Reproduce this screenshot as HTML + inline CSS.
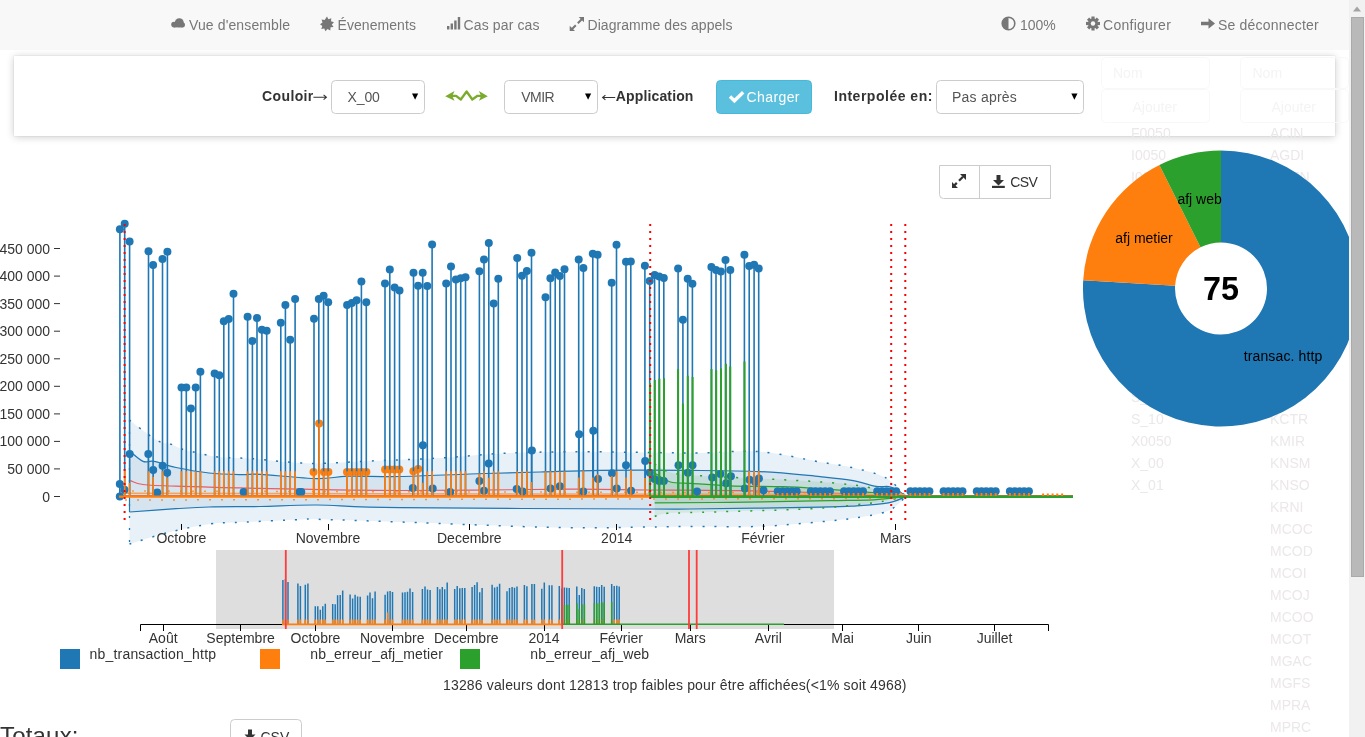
<!DOCTYPE html>
<html><head><meta charset="utf-8">
<style>
html,body{margin:0;padding:0;width:1365px;height:737px;overflow:hidden;background:#fff;font-family:"Liberation Sans",sans-serif;}
#nav{position:absolute;z-index:0;left:0;top:0;width:1349px;height:50px;background:#f8f8f8;}
#panel{position:absolute;z-index:0;left:14px;top:56px;width:1321px;height:80px;background:#fff;box-shadow:0 0 1px rgba(0,0,0,0.18),0 1px 8px rgba(0,0,0,0.2);}
#sb{position:absolute;z-index:6;left:1349px;top:0;width:16px;height:737px;background:#f1f1f1;}
#thumb{position:absolute;z-index:7;left:1351px;top:17px;width:13px;height:560px;background:#b9b9b9;border:1px solid #aaa;box-sizing:border-box;}
svg{position:absolute;left:0;top:0;will-change:transform;}
text{font-family:"Liberation Sans",sans-serif;}
</style></head><body>
<svg width="1365" height="737" style="z-index:1">
<text x="1131" y="138.4" font-size="14" fill="#ece8ea">F0050</text>
<text x="1131" y="160.4" font-size="14" fill="#ece8ea">I0050</text>
<text x="1131" y="182.4" font-size="14" fill="#ece8ea">I0060</text>
<text x="1131" y="204.4" font-size="14" fill="#ece8ea">J0050</text>
<text x="1131" y="226.4" font-size="14" fill="#ece8ea">J0060</text>
<text x="1131" y="248.4" font-size="14" fill="#ece8ea">K0050</text>
<text x="1131" y="270.4" font-size="14" fill="#ece8ea">L0050</text>
<text x="1131" y="292.4" font-size="14" fill="#ece8ea">M0050</text>
<text x="1131" y="314.4" font-size="14" fill="#ece8ea">N0050</text>
<text x="1131" y="336.4" font-size="14" fill="#ece8ea">P0050</text>
<text x="1131" y="358.4" font-size="14" fill="#ece8ea">Q0050</text>
<text x="1131" y="380.4" font-size="14" fill="#ece8ea">R0050</text>
<text x="1131" y="402.4" font-size="14" fill="#ece8ea">S_00</text>
<text x="1131" y="424.4" font-size="14" fill="#ece8ea">S_10</text>
<text x="1131" y="446.4" font-size="14" fill="#ece8ea">X0050</text>
<text x="1131" y="468.4" font-size="14" fill="#ece8ea">X_00</text>
<text x="1131" y="490.4" font-size="14" fill="#ece8ea">X_01</text>
<text x="1270" y="138.4" font-size="14" fill="#ece8ea">ACIN</text>
<text x="1270" y="160.4" font-size="14" fill="#ece8ea">AGDI</text>
<text x="1270" y="182.4" font-size="14" fill="#ece8ea">AGEN</text>
<text x="1270" y="204.4" font-size="14" fill="#ece8ea">AGRE</text>
<text x="1270" y="226.4" font-size="14" fill="#ece8ea">BCAR</text>
<text x="1270" y="248.4" font-size="14" fill="#ece8ea">BCOM</text>
<text x="1270" y="270.4" font-size="14" fill="#ece8ea">BDOC</text>
<text x="1270" y="292.4" font-size="14" fill="#ece8ea">CAPT</text>
<text x="1270" y="314.4" font-size="14" fill="#ece8ea">CFAC</text>
<text x="1270" y="336.4" font-size="14" fill="#ece8ea">DCLI</text>
<text x="1270" y="358.4" font-size="14" fill="#ece8ea">EDIT</text>
<text x="1270" y="380.4" font-size="14" fill="#ece8ea">GCOM</text>
<text x="1270" y="402.4" font-size="14" fill="#ece8ea">KCAP</text>
<text x="1270" y="424.4" font-size="14" fill="#ece8ea">KCTR</text>
<text x="1270" y="446.4" font-size="14" fill="#ece8ea">KMIR</text>
<text x="1270" y="468.4" font-size="14" fill="#ece8ea">KNSM</text>
<text x="1270" y="490.4" font-size="14" fill="#ece8ea">KNSO</text>
<text x="1270" y="512.4" font-size="14" fill="#ece8ea">KRNI</text>
<text x="1270" y="534.4" font-size="14" fill="#ece8ea">MCOC</text>
<text x="1270" y="556.4" font-size="14" fill="#ece8ea">MCOD</text>
<text x="1270" y="578.4" font-size="14" fill="#ece8ea">MCOI</text>
<text x="1270" y="600.4" font-size="14" fill="#ece8ea">MCOJ</text>
<text x="1270" y="622.4" font-size="14" fill="#ece8ea">MCOO</text>
<text x="1270" y="644.4" font-size="14" fill="#ece8ea">MCOT</text>
<text x="1270" y="666.4" font-size="14" fill="#ece8ea">MGAC</text>
<text x="1270" y="688.4" font-size="14" fill="#ece8ea">MGFS</text>
<text x="1270" y="710.4" font-size="14" fill="#ece8ea">MPRA</text>
<text x="1270" y="732.4" font-size="14" fill="#ece8ea">MPRC</text>
<g fill="none" stroke="#f8f8f8" stroke-width="1">
<rect x="1101.5" y="57.5" width="108" height="31" rx="4"/>
<rect x="1101.5" y="89.5" width="108" height="33" rx="4"/>
<rect x="1240.5" y="57.5" width="108" height="31" rx="4"/>
<rect x="1240.5" y="89.5" width="108" height="33" rx="4"/>
</g>
<g font-size="14" fill="#f4f4f4">
<text x="1113" y="77.5">Nom</text>
<text x="1252.5" y="77.5">Nom</text>
<text x="1132.5" y="111.5">Ajouter</text>
<text x="1271.5" y="111.5">Ajouter</text>
</g>
</svg>
<div id="nav"></div>
<div id="panel"></div>
<svg width="1365" height="737" style="z-index:2">
<g font-size="14" fill="#777">
<!-- cloud -->
<g fill="#777"><circle cx="179.3" cy="22.7" r="4.5"/><circle cx="174" cy="24.6" r="2.8"/><circle cx="182.4" cy="24.8" r="2.6"/><rect x="174" y="23" width="8.4" height="4.4"/></g>
<text x="189" y="30" textLength="101" lengthAdjust="spacing">Vue d'ensemble</text>
<!-- certificate starburst -->
<path d="M327 16.5 L328.4 19.2 L331.3 18.2 L331 21.2 L334 22.3 L331.8 24.4 L333.6 26.9 L330.6 27.3 L330.3 30.4 L327.5 29.1 L325.4 31.3 L324.3 28.5 L321.3 28.9 L322.3 26 L320 24.2 L322.5 22.5 L321.6 19.6 L324.6 19.9 Z" fill="#777"/>
<text x="337.5" y="30" textLength="78.4" lengthAdjust="spacing">Évenements</text>
<!-- signal -->
<rect x="447" y="26" width="2.4" height="3.5" fill="#777"/>
<rect x="450.6" y="23.5" width="2.4" height="6" fill="#777"/>
<rect x="454.2" y="20.5" width="2.4" height="9" fill="#777"/>
<rect x="457.8" y="17" width="2.4" height="12.5" fill="#777"/>
<text x="463.5" y="30" textLength="76" lengthAdjust="spacing">Cas par cas</text>
<!-- resize full -->
<path d="M577.8 23.2 L581.8 19.2 M575.8 25.2 L571.8 29.2" stroke="#777" stroke-width="2"/>
<path d="M584 17 V22.3 L578.7 17Z M569.7 31 V25.7 L575 31Z" fill="#777"/>
<text x="587.5" y="30" textLength="145" lengthAdjust="spacing">Diagramme des appels</text>
<!-- adjust -->
<circle cx="1008.5" cy="23.5" r="6.3" fill="none" stroke="#777" stroke-width="1.6"/>
<path d="M1008.5 17.2 A6.3 6.3 0 0 0 1008.5 29.8Z" fill="#777"/>
<text x="1020" y="30" textLength="35.6" lengthAdjust="spacing">100%</text>
<!-- cog -->
<g transform="translate(1093,23.5)">
<circle r="5" fill="#777"/>
<g fill="#777">
<rect x="-1.6" y="-7" width="3.2" height="14"/>
<rect x="-1.6" y="-7" width="3.2" height="14" transform="rotate(45)"/>
<rect x="-1.6" y="-7" width="3.2" height="14" transform="rotate(90)"/>
<rect x="-1.6" y="-7" width="3.2" height="14" transform="rotate(135)"/>
</g>
<circle r="2.2" fill="#f8f8f8"/>
</g>
<text x="1103" y="30" textLength="67.8" lengthAdjust="spacing">Configurer</text>
<!-- arrow right -->
<path d="M1201 21.8 H1208.5 V18.2 L1215 23.5 L1208.5 28.8 V25.2 H1201Z" fill="#777"/>
<text x="1218" y="30" textLength="100.7" lengthAdjust="spacing">Se déconnecter</text>
</g>

<!-- form -->
<g font-size="14">
<text x="262" y="101" font-weight="bold" fill="#333" textLength="51.3" lengthAdjust="spacing">Couloir</text>
<path d="M313.4 97.3 H326.4 M323.6 94.9 L326.4 97.3 L323.6 99.7" fill="none" stroke="#333" stroke-width="1.1"/>
<rect x="331.5" y="80.5" width="93" height="33" rx="4" fill="#fff" stroke="#ccc"/>
<text x="347.5" y="102" fill="#555" textLength="32.4" lengthAdjust="spacing">X_00</text>
<path d="M412 93.6 L418.2 93.6 L415.1 99.8Z" fill="#000"/>
<!-- wavy arrows -->
<path d="M452 95.8 H456.1 L460.8 99.5 L466.6 91.5 L472.3 99.5 L477.5 95.8 H481" fill="none" stroke="#7aab2d" stroke-width="2.3" stroke-linejoin="round"/>
<path d="M445.2 96.3 L454.5 91 L452.3 96.1 L454.5 100.8Z" fill="#7aab2d"/>
<path d="M487.8 96.3 L478.9 91 L481.1 96.1 L478.9 100.8Z" fill="#7aab2d"/>
<rect x="504.5" y="80.5" width="93" height="33" rx="4" fill="#fff" stroke="#ccc"/>
<text x="521.2" y="102" fill="#555" textLength="33.5" lengthAdjust="spacing">VMIR</text>
<path d="M585 93.6 L591.2 93.6 L588.1 99.8Z" fill="#000"/>
<text x="615.8" y="101" font-weight="bold" fill="#333" textLength="77.6" lengthAdjust="spacing">Application</text>
<path d="M602.6 97.5 H615.2 M605.4 95.1 L602.6 97.5 L605.4 99.9" fill="none" stroke="#333" stroke-width="1.1"/>
<rect x="716.5" y="80.5" width="95" height="33" rx="4" fill="#5bc0de" stroke="#46b8da"/>
<path d="M730 96.6 L734.4 100.8 L743.2 92.3" fill="none" stroke="#fff" stroke-width="3.4"/>
<text x="746.5" y="102" fill="#fff" textLength="53" lengthAdjust="spacing">Charger</text>
<text x="834" y="101" font-weight="bold" fill="#333" textLength="98.4" lengthAdjust="spacing">Interpolée en:</text>
<rect x="936.5" y="80.5" width="147" height="33" rx="4" fill="#fff" stroke="#ccc"/>
<text x="952" y="102" fill="#555" textLength="64.8" lengthAdjust="spacing">Pas après</text>
<path d="M1071.3 93.6 L1077.5 93.6 L1074.4 99.8Z" fill="#000"/>
</g>

<!-- csv group -->
<path d="M979.5 165.5 H939.5 V194.5 A4 4 0 0 0 943.5 198.5 H979.5Z" fill="#fff" stroke="#ccc"/>
<rect x="979.5" y="165.5" width="71" height="33" fill="#fff" stroke="#ccc"/>
<path d="M959 180.7 L963 176.7 M956.8 182.9 L953 186.7" stroke="#333" stroke-width="2.2"/>
<path d="M966 174 V180 L960 174Z M952 188.1 V182.1 L958 188.1Z" fill="#333"/>
<path d="M996.5 175 H1000.5 V180 H1004 L998.5 185.5 L993 180 H996.5Z" fill="#333"/>
<rect x="992" y="185.8" width="12.8" height="2.2" fill="#333"/>
<text x="1010.2" y="186.6" font-size="14" fill="#333" textLength="27.6" lengthAdjust="spacing">CSV</text>

<!-- totaux -->
<text x="0" y="743.5" font-size="24" fill="#333" textLength="78.5" lengthAdjust="spacing">Totaux:</text>
<rect x="230.5" y="719.5" width="71" height="34" rx="4" fill="#fff" stroke="#ccc"/>
<path d="M248 729.5 H252 V734.5 H255.5 L250 740 L244.5 734.5 H248Z" fill="#333"/>
<text x="260.5" y="742" font-size="14" fill="#333">CSV</text>

<path d="M129.5 420 C132.1 422 140 428.4 145 432 C150 435.6 155.1 439.5 159.5 441.6 C163.9 443.7 167.7 443.1 171.5 444.4 C175.3 445.7 178.8 448 182.5 449.3 C186.2 450.6 189.7 451.1 193.5 452 C197.3 452.9 201.6 454 205.6 454.8 C209.6 455.6 211.8 456.4 217.7 457 C223.6 457.6 234.9 457.8 240.8 458.1 C246.7 458.4 241.4 457.8 252.9 458.7 C264.4 459.6 290.5 463 310 463.4 C329.5 463.8 348.3 461.9 370 461 C391.7 460.1 418.3 459.2 440 458 C461.7 456.8 478.3 454.6 500 453.5 C521.7 452.4 545 451.9 570 451.7 C595 451.5 628.5 452.3 650 452.5 C671.5 452.7 680.7 453 699 452.9 C717.3 452.8 739.8 450.2 760 451.7 C780.2 453.2 804.7 459.4 820 462 C835.3 464.6 840.7 464.9 851.7 467.5 C862.7 470.1 877 473.1 886 477.9 C895 482.7 902.2 493.1 905.5 496.2 L905.5 496.8 C902.6 499.1 896.9 507.2 888.4 510.8 C879.9 514.4 865.6 516.3 854.2 518.1 C842.8 519.9 835.7 520.4 820 521.8 C804.3 523.2 781.7 525.6 760 526.4 C738.3 527.2 708.3 526.3 690 526.4 C671.7 526.5 671.7 526.8 650 527 C628.3 527.2 601.7 528.4 560 527.6 C518.3 526.8 440.5 523.4 400 522 C359.5 520.6 333.7 519.7 317 519.3 C300.3 518.9 312.8 519.1 300 519.6 C287.2 520.1 255 521.6 240 522.3 C225 523 221.7 522.4 210 524 C198.3 525.6 183.4 528.7 170 532 C156.6 535.3 136.2 542 129.5 544 Z" fill="#e8f0f8"/>
<path d="M129.5 451 C131.8 452.7 138.9 459.7 143 461.4 C147.1 463.1 148.5 460.4 154 461.4 C159.5 462.4 166.8 465.6 176 467.5 C185.2 469.4 198 471.8 209 473 C220 474.2 233.5 474.4 242 474.6 C250.5 474.8 247.5 473.6 260 474.3 C272.5 475 302.4 478.3 317 478.6 C331.6 478.9 333.7 476.6 347.5 476.2 C361.3 475.8 379.6 476.9 400 476.5 C420.4 476.1 446.7 474.8 470 474 C493.3 473.2 518.3 472.6 540 472 C561.7 471.4 575 470.7 600 470.4 C625 470.1 663.3 470.2 690 470.4 C716.7 470.6 738.3 470.6 760 471.6 C781.7 472.6 804.7 475.2 820 476.6 C835.3 478.1 842.3 478.7 851.7 480.3 C861.1 481.9 869.7 485.3 876.2 486.4 C882.7 487.5 885.9 485.5 890.8 487 C895.7 488.5 903 494.2 905.5 495.6 L905.5 496.8 C902.6 497.8 896.5 501.4 888.4 502.9 C880.2 504.4 868 505.2 856.6 505.9 C845.2 506.6 847.8 506.7 820 507.2 C792.2 507.7 718.3 508.7 690 509 C661.7 509.3 698.3 509.2 650 509 C601.7 508.8 455.5 508.4 400 507.7 C344.5 507 340.3 505.2 317 505 C293.7 504.8 278 506.2 260 506.5 C242 506.8 223 506.6 209 507 C195 507.4 189.2 507.9 176 508.7 C162.8 509.5 137.2 511.4 129.5 512 Z" fill="#d6e4ef"/>
<path d="M654.7 464 C657.3 465.4 662.2 470.4 670.5 472.4 C678.8 474.4 682 474.6 704.7 476 C727.4 477.4 780.8 479.4 806.7 481 C832.6 482.6 847.6 484.1 860 485.8 C872.4 487.5 873.5 489.6 881 491.3 C888.5 493 901 495.2 905 496 L905 496.8 C901 497.6 889.1 500.4 881 501.7 C872.9 503 869 503.5 856.6 504.7 C844.2 505.9 834.4 507.7 806.7 509 C779.1 510.3 714 511.9 690.7 512.6 C667.4 513.3 673 512.7 667 513.3 C661 513.9 656.8 515.8 654.7 516.3 Z" fill="rgba(44,160,44,0.10)"/>
<path d="M654.7 473 C657.3 474.5 664.4 480.3 670.5 482 C676.6 483.7 681.4 482.7 691.3 483.3 C701.2 483.9 714.7 485.2 730 485.8 C745.3 486.4 768 486.2 783 486.7 C798 487.2 805.1 487.8 820 488.8 C834.9 489.8 858.3 491.3 872.5 492.5 C886.7 493.7 899.6 495.4 905 496 L905 496.8 C899.8 497.3 886.2 499.2 873.7 499.8 C861.2 500.4 854 500.3 830 500.7 C806 501.1 759.2 501.9 730 502.3 C700.8 502.7 667.2 502.8 654.7 502.9 Z" fill="rgba(44,160,44,0.10)"/>
<path d="M129.5 420 C132.1 422 140 428.4 145 432 C150 435.6 155.1 439.5 159.5 441.6 C163.9 443.7 167.7 443.1 171.5 444.4 C175.3 445.7 178.8 448 182.5 449.3 C186.2 450.6 189.7 451.1 193.5 452 C197.3 452.9 201.6 454 205.6 454.8 C209.6 455.6 211.8 456.4 217.7 457 C223.6 457.6 234.9 457.8 240.8 458.1 C246.7 458.4 241.4 457.8 252.9 458.7 C264.4 459.6 290.5 463 310 463.4 C329.5 463.8 348.3 461.9 370 461 C391.7 460.1 418.3 459.2 440 458 C461.7 456.8 478.3 454.6 500 453.5 C521.7 452.4 545 451.9 570 451.7 C595 451.5 628.5 452.3 650 452.5 C671.5 452.7 680.7 453 699 452.9 C717.3 452.8 739.8 450.2 760 451.7 C780.2 453.2 804.7 459.4 820 462 C835.3 464.6 840.7 464.9 851.7 467.5 C862.7 470.1 877 473.1 886 477.9 C895 482.7 902.2 493.1 905.5 496.2" fill="none" stroke="#1f77b4" stroke-width="1.5" stroke-dasharray="2 10"/>
<path d="M129.5 544 C136.2 542 156.6 535.3 170 532 C183.4 528.7 198.3 525.6 210 524 C221.7 522.4 225 523 240 522.3 C255 521.6 287.2 520.1 300 519.6 C312.8 519.1 300.3 518.9 317 519.3 C333.7 519.7 359.5 520.6 400 522 C440.5 523.4 518.3 526.8 560 527.6 C601.7 528.4 628.3 527.2 650 527 C671.7 526.8 671.7 526.5 690 526.4 C708.3 526.3 738.3 527.2 760 526.4 C781.7 525.6 804.3 523.2 820 521.8 C835.7 520.4 842.8 519.9 854.2 518.1 C865.6 516.3 879.9 514.4 888.4 510.8 C896.9 507.2 902.6 499.1 905.5 496.8" fill="none" stroke="#1f77b4" stroke-width="1.5" stroke-dasharray="2 10"/>
<path d="M129.5 451 C131.8 452.7 138.9 459.7 143 461.4 C147.1 463.1 148.5 460.4 154 461.4 C159.5 462.4 166.8 465.6 176 467.5 C185.2 469.4 198 471.8 209 473 C220 474.2 233.5 474.4 242 474.6 C250.5 474.8 247.5 473.6 260 474.3 C272.5 475 302.4 478.3 317 478.6 C331.6 478.9 333.7 476.6 347.5 476.2 C361.3 475.8 379.6 476.9 400 476.5 C420.4 476.1 446.7 474.8 470 474 C493.3 473.2 518.3 472.6 540 472 C561.7 471.4 575 470.7 600 470.4 C625 470.1 663.3 470.2 690 470.4 C716.7 470.6 738.3 470.6 760 471.6 C781.7 472.6 804.7 475.2 820 476.6 C835.3 478.1 842.3 478.7 851.7 480.3 C861.1 481.9 869.7 485.3 876.2 486.4 C882.7 487.5 885.9 485.5 890.8 487 C895.7 488.5 903 494.2 905.5 495.6" fill="none" stroke="#1f77b4" stroke-width="1.2"/>
<path d="M129.5 420 V544" stroke="#1f77b4" stroke-width="1.3" stroke-dasharray="2 10"/>
<path d="M129.5 497 V512" stroke="#1f77b4" stroke-width="1.2"/>
<path d="M129.5 512 C137.2 511.4 162.8 509.5 176 508.7 C189.2 507.9 195 507.4 209 507 C223 506.6 242 506.8 260 506.5 C278 506.2 293.7 504.8 317 505 C340.3 505.2 344.5 507 400 507.7 C455.5 508.4 601.7 508.8 650 509 C698.3 509.2 661.7 509.3 690 509 C718.3 508.7 792.2 507.7 820 507.2 C847.8 506.7 845.2 506.6 856.6 505.9 C868 505.2 880.2 504.4 888.4 502.9 C896.5 501.4 902.6 497.8 905.5 496.8" fill="none" stroke="#1f77b4" stroke-width="1.2"/>
<path d="M130.4 480.7 C132.5 481.3 135.4 483.6 143 484.5 C150.6 485.4 156.5 485.6 176 486.2 C195.5 486.8 222.7 487.7 260 488.4 C297.3 489.1 348.3 490.4 400 490.5 C451.7 490.6 528.3 489.3 570 489.2 C611.7 489.1 618.3 489.7 650 490 C681.7 490.3 717.5 490.1 760 491 C802.5 491.9 880.8 494.8 905 495.5" fill="none" stroke="#ef5a5f" stroke-width="1.2"/>
<path d="M654.7 473 C657.3 474.5 664.4 480.3 670.5 482 C676.6 483.7 681.4 482.7 691.3 483.3 C701.2 483.9 714.7 485.2 730 485.8 C745.3 486.4 768 486.2 783 486.7 C798 487.2 805.1 487.8 820 488.8 C834.9 489.8 858.3 491.3 872.5 492.5 C886.7 493.7 899.6 495.4 905 496" fill="none" stroke="#2ca02c" stroke-width="1.2"/>
<path d="M654.7 502.9 C667.2 502.8 700.8 502.7 730 502.3 C759.2 501.9 806 501.1 830 500.7 C854 500.3 861.2 500.4 873.7 499.8 C886.2 499.2 899.8 497.3 905 496.8" fill="none" stroke="#2ca02c" stroke-width="1.2"/>
<path d="M654.7 464 C657.3 465.4 662.2 470.4 670.5 472.4 C678.8 474.4 682 474.6 704.7 476 C727.4 477.4 780.8 479.4 806.7 481 C832.6 482.6 847.6 484.1 860 485.8 C872.4 487.5 873.5 489.6 881 491.3 C888.5 493 901 495.2 905 496" fill="none" stroke="#2ca02c" stroke-width="1.5" stroke-dasharray="2 10"/>
<path d="M654.7 516.3 C656.8 515.8 661 513.9 667 513.3 C673 512.7 667.4 513.3 690.7 512.6 C714 511.9 779.1 510.3 806.7 509 C834.4 507.7 844.2 505.9 856.6 504.7 C869 503.5 872.9 503 881 501.7 C889.1 500.4 901 497.6 905 496.8" fill="none" stroke="#2ca02c" stroke-width="1.5" stroke-dasharray="2 10"/>
<path d="M120 493.3 L905 494.5" stroke="#f5a35a" stroke-width="1.5" fill="none"/>
<path d="M120 491 L905 493" stroke="#ff7f0e" stroke-width="1.5" stroke-dasharray="2 10" fill="none" opacity="0.7"/>
<path d="M125 500 L905 498.5" stroke="#ff7f0e" stroke-width="1.5" stroke-dasharray="2 10" fill="none" opacity="0.8"/>
<path d="M120 495.5 L1073 495.5" stroke="#f06040" stroke-width="1" fill="none"/>
<g fill="#ff7f0e"><circle cx="313.5" cy="471.9" r="4"/><circle cx="319.1" cy="423.5" r="4"/><circle cx="323.9" cy="471.9" r="4"/><circle cx="328.4" cy="471.9" r="4"/><circle cx="347" cy="471.9" r="4"/><circle cx="351.8" cy="471.9" r="4"/><circle cx="356.7" cy="471.9" r="4"/><circle cx="361.5" cy="471.9" r="4"/><circle cx="366.4" cy="471.9" r="4"/><circle cx="385.1" cy="469.5" r="4"/><circle cx="389.6" cy="469.5" r="4"/><circle cx="394.5" cy="469.5" r="4"/><circle cx="399.3" cy="469.5" r="4"/><circle cx="413.4" cy="471.2" r="4"/><circle cx="418.2" cy="469" r="4"/></g>
<path d="M119.9 229.3 V496.5 M124.7 223.8 V496.5 M129.6 241.4 V496.5 M148.5 251.3 V496.5 M153.1 265.1 V496.5 M162.5 259 V496.5 M167.4 251.7 V496.5 M181.5 387.5 V496.5 M186.3 387.5 V496.5 M190.9 408.6 V496.5 M195.7 387.5 V496.5 M200.4 371.8 V496.5 M214.6 373.5 V496.5 M219.3 375.3 V496.5 M223.8 321.2 V496.5 M228.7 319 V496.5 M233.5 293.7 V496.5 M247.6 316.8 V496.5 M252.4 340.9 V496.5 M257 317.9 V496.5 M261.9 329.7 V496.5 M266.7 330.8 V496.5 M280.8 322.7 V496.5 M285.4 305.1 V496.5 M290.2 339.8 V496.5 M295.1 299 V496.5 M314 318.7 V496.5 M318.8 299 V496.5 M323.6 295.7 V496.5 M328.2 302.3 V496.5 M347.1 305.1 V496.5 M351.8 302.9 V496.5 M356.6 300.3 V496.5 M361.4 281.4 V496.5 M366.3 302.3 V496.5 M385 283.4 V496.5 M389.8 269.5 V496.5 M394.6 287.5 V496.5 M399.5 290.4 V496.5 M413.5 272.8 V496.5 M418.1 285.8 V496.5 M422.7 272.8 V496.5 M427.3 286 V496.5 M432.1 244.5 V496.5 M446.2 283.4 V496.5 M451 266.6 V496.5 M455.9 279.4 V496.5 M460.7 278.3 V496.5 M465.5 277.2 V496.5 M479.4 271.3 V496.5 M484 259.6 V496.5 M488.8 243.1 V496.5 M493.7 303.6 V496.5 M498.3 278.7 V496.5 M517.2 258.1 V496.5 M522 275.7 V496.5 M526.9 271 V496.5 M531.5 252.8 V496.5 M545.5 297.2 V496.5 M550.4 278.3 V496.5 M555.2 272.6 V496.5 M559.8 276.1 V496.5 M564.5 269.3 V496.5 M578.7 259.6 V496.5 M583.4 268 V496.5 M592.8 253.7 V496.5 M597.6 254.8 V496.5 M611.7 282.7 V496.5 M616.5 244.7 V496.5 M626 261.8 V496.5 M630.8 261.6 V496.5 M644.9 265.8 V496.5 M649.7 280.9 V496.5 M654.6 275 V496.5 M659.2 276.5 V496.5 M663.8 278.1 V496.5 M678.1 268.4 V496.5 M682.9 319.8 V496.5 M687.7 278.7 V496.5 M692.4 283.7 V496.5 M711.4 267.1 V496.5 M716 269.9 V496.5 M720.9 271.5 V496.5 M725.5 260.1 V496.5 M730.3 269.9 V496.5 M744.4 254.8 V496.5 M749.2 266 V496.5 M754.1 264.7 V496.5 M758.7 268.4 V496.5 M119.8 484 V496.5 M119.8 496.5 V496.5 M124.5 489.8 V496.5 M129.7 454 V496.5 M148.3 454 V496.5 M153.2 470 V496.5 M162.6 465.7 V496.5 M167.2 472.7 V496.5 M157.2 492.6 V496.5 M243.6 492 V496.5 M299.6 492 V496.5 M301.3 491.9 V496.5 M422.9 445.2 V496.5 M412.8 488 V496.5 M432.7 488.6 V496.5 M450.2 491.9 V496.5 M479.4 480.9 V496.5 M488.7 463.4 V496.5 M484 490.7 V496.5 M516.7 489 V496.5 M522.6 491.4 V496.5 M531.9 450.5 V496.5 M550.6 488.6 V496.5 M559.9 486.3 V496.5 M583.3 491.4 V496.5 M579.1 434.2 V496.5 M593.3 430.7 V496.5 M598 479 V496.5 M612 473.2 V496.5 M616.7 488.4 V496.5 M626 465.3 V496.5 M631.1 490.7 V496.5 M645.2 461 V496.5 M649.8 472.7 V496.5 M654.5 479 V496.5 M659.2 480.9 V496.5 M663.8 480.9 V496.5 M678.5 465.3 V496.5 M687.9 472.7 V496.5 M692.5 465.3 V496.5 M697 491.4 V496.5 M712.2 477.4 V496.5 M720.4 473.9 V496.5 M726.2 483.2 V496.5 M730.9 476.2 V496.5 M744.9 488.6 V496.5 M749.5 479.7 V496.5 M755.4 482 V496.5 M758.9 478.6 V496.5 M763.5 490.2 V496.5" stroke="#1f77b4" stroke-width="1.6" fill="none"/>
<g fill="#1f77b4"><circle cx="119.9" cy="229.3" r="4"/><circle cx="124.7" cy="223.8" r="4"/><circle cx="129.6" cy="241.4" r="4"/><circle cx="148.5" cy="251.3" r="4"/><circle cx="153.1" cy="265.1" r="4"/><circle cx="162.5" cy="259" r="4"/><circle cx="167.4" cy="251.7" r="4"/><circle cx="181.5" cy="387.5" r="4"/><circle cx="186.3" cy="387.5" r="4"/><circle cx="190.9" cy="408.6" r="4"/><circle cx="195.7" cy="387.5" r="4"/><circle cx="200.4" cy="371.8" r="4"/><circle cx="214.6" cy="373.5" r="4"/><circle cx="219.3" cy="375.3" r="4"/><circle cx="223.8" cy="321.2" r="4"/><circle cx="228.7" cy="319" r="4"/><circle cx="233.5" cy="293.7" r="4"/><circle cx="247.6" cy="316.8" r="4"/><circle cx="252.4" cy="340.9" r="4"/><circle cx="257" cy="317.9" r="4"/><circle cx="261.9" cy="329.7" r="4"/><circle cx="266.7" cy="330.8" r="4"/><circle cx="280.8" cy="322.7" r="4"/><circle cx="285.4" cy="305.1" r="4"/><circle cx="290.2" cy="339.8" r="4"/><circle cx="295.1" cy="299" r="4"/><circle cx="314" cy="318.7" r="4"/><circle cx="318.8" cy="299" r="4"/><circle cx="323.6" cy="295.7" r="4"/><circle cx="328.2" cy="302.3" r="4"/><circle cx="347.1" cy="305.1" r="4"/><circle cx="351.8" cy="302.9" r="4"/><circle cx="356.6" cy="300.3" r="4"/><circle cx="361.4" cy="281.4" r="4"/><circle cx="366.3" cy="302.3" r="4"/><circle cx="385" cy="283.4" r="4"/><circle cx="389.8" cy="269.5" r="4"/><circle cx="394.6" cy="287.5" r="4"/><circle cx="399.5" cy="290.4" r="4"/><circle cx="413.5" cy="272.8" r="4"/><circle cx="418.1" cy="285.8" r="4"/><circle cx="422.7" cy="272.8" r="4"/><circle cx="427.3" cy="286" r="4"/><circle cx="432.1" cy="244.5" r="4"/><circle cx="446.2" cy="283.4" r="4"/><circle cx="451" cy="266.6" r="4"/><circle cx="455.9" cy="279.4" r="4"/><circle cx="460.7" cy="278.3" r="4"/><circle cx="465.5" cy="277.2" r="4"/><circle cx="479.4" cy="271.3" r="4"/><circle cx="484" cy="259.6" r="4"/><circle cx="488.8" cy="243.1" r="4"/><circle cx="493.7" cy="303.6" r="4"/><circle cx="498.3" cy="278.7" r="4"/><circle cx="517.2" cy="258.1" r="4"/><circle cx="522" cy="275.7" r="4"/><circle cx="526.9" cy="271" r="4"/><circle cx="531.5" cy="252.8" r="4"/><circle cx="545.5" cy="297.2" r="4"/><circle cx="550.4" cy="278.3" r="4"/><circle cx="555.2" cy="272.6" r="4"/><circle cx="559.8" cy="276.1" r="4"/><circle cx="564.5" cy="269.3" r="4"/><circle cx="578.7" cy="259.6" r="4"/><circle cx="583.4" cy="268" r="4"/><circle cx="592.8" cy="253.7" r="4"/><circle cx="597.6" cy="254.8" r="4"/><circle cx="611.7" cy="282.7" r="4"/><circle cx="616.5" cy="244.7" r="4"/><circle cx="626" cy="261.8" r="4"/><circle cx="630.8" cy="261.6" r="4"/><circle cx="644.9" cy="265.8" r="4"/><circle cx="649.7" cy="280.9" r="4"/><circle cx="654.6" cy="275" r="4"/><circle cx="659.2" cy="276.5" r="4"/><circle cx="663.8" cy="278.1" r="4"/><circle cx="678.1" cy="268.4" r="4"/><circle cx="682.9" cy="319.8" r="4"/><circle cx="687.7" cy="278.7" r="4"/><circle cx="692.4" cy="283.7" r="4"/><circle cx="711.4" cy="267.1" r="4"/><circle cx="716" cy="269.9" r="4"/><circle cx="720.9" cy="271.5" r="4"/><circle cx="725.5" cy="260.1" r="4"/><circle cx="730.3" cy="269.9" r="4"/><circle cx="744.4" cy="254.8" r="4"/><circle cx="749.2" cy="266" r="4"/><circle cx="754.1" cy="264.7" r="4"/><circle cx="758.7" cy="268.4" r="4"/><circle cx="119.8" cy="484" r="4"/><circle cx="119.8" cy="496.5" r="4"/><circle cx="124.5" cy="489.8" r="4"/><circle cx="129.7" cy="454" r="4"/><circle cx="148.3" cy="454" r="4"/><circle cx="153.2" cy="470" r="4"/><circle cx="162.6" cy="465.7" r="4"/><circle cx="167.2" cy="472.7" r="4"/><circle cx="157.2" cy="492.6" r="4"/><circle cx="243.6" cy="492" r="4"/><circle cx="299.6" cy="492" r="4"/><circle cx="301.3" cy="491.9" r="4"/><circle cx="422.9" cy="445.2" r="4"/><circle cx="412.8" cy="488" r="4"/><circle cx="432.7" cy="488.6" r="4"/><circle cx="450.2" cy="491.9" r="4"/><circle cx="479.4" cy="480.9" r="4"/><circle cx="488.7" cy="463.4" r="4"/><circle cx="484" cy="490.7" r="4"/><circle cx="516.7" cy="489" r="4"/><circle cx="522.6" cy="491.4" r="4"/><circle cx="531.9" cy="450.5" r="4"/><circle cx="550.6" cy="488.6" r="4"/><circle cx="559.9" cy="486.3" r="4"/><circle cx="583.3" cy="491.4" r="4"/><circle cx="579.1" cy="434.2" r="4"/><circle cx="593.3" cy="430.7" r="4"/><circle cx="598" cy="479" r="4"/><circle cx="612" cy="473.2" r="4"/><circle cx="616.7" cy="488.4" r="4"/><circle cx="626" cy="465.3" r="4"/><circle cx="631.1" cy="490.7" r="4"/><circle cx="645.2" cy="461" r="4"/><circle cx="649.8" cy="472.7" r="4"/><circle cx="654.5" cy="479" r="4"/><circle cx="659.2" cy="480.9" r="4"/><circle cx="663.8" cy="480.9" r="4"/><circle cx="678.5" cy="465.3" r="4"/><circle cx="687.9" cy="472.7" r="4"/><circle cx="692.5" cy="465.3" r="4"/><circle cx="697" cy="491.4" r="4"/><circle cx="712.2" cy="477.4" r="4"/><circle cx="720.4" cy="473.9" r="4"/><circle cx="726.2" cy="483.2" r="4"/><circle cx="730.9" cy="476.2" r="4"/><circle cx="744.9" cy="488.6" r="4"/><circle cx="749.5" cy="479.7" r="4"/><circle cx="755.4" cy="482" r="4"/><circle cx="758.9" cy="478.6" r="4"/><circle cx="763.5" cy="490.2" r="4"/></g>
<path d="M124.7 471 V496.5 M129.6 483 V496.5 M148.5 471.3 V496.5 M153.1 476.8 V496.5 M162.5 471.3 V496.5 M167.4 477.4 V496.5 M181.5 471.3 V496.5 M186.3 471.3 V496.5 M190.9 471.3 V496.5 M195.7 471.3 V496.5 M200.4 471.3 V496.5 M214.6 471.3 V496.5 M219.3 471.3 V496.5 M223.8 471.3 V496.5 M228.7 471.3 V496.5 M233.5 471.3 V496.5 M247.6 471.3 V496.5 M252.4 471.3 V496.5 M257 471.3 V496.5 M261.9 471.3 V496.5 M266.7 471.3 V496.5 M280.8 471.3 V496.5 M285.4 471.3 V496.5 M290.2 471.3 V496.5 M295.1 471.3 V496.5 M314 471.3 V496.5 M318.8 471.3 V496.5 M323.6 471.3 V496.5 M328.2 471.3 V496.5 M347.1 471.3 V496.5 M351.8 471.3 V496.5 M356.6 471.3 V496.5 M361.4 471.3 V496.5 M366.3 471.3 V496.5 M385 471.3 V496.5 M389.8 471.3 V496.5 M394.6 471.3 V496.5 M399.5 471.3 V496.5 M413.5 471.3 V496.5 M418.1 471.3 V496.5 M422.7 482.8 V496.5 M427.3 471.3 V496.5 M432.1 471.3 V496.5 M446.2 471.3 V496.5 M451 471.3 V496.5 M455.9 471.3 V496.5 M460.7 471.3 V496.5 M465.5 471.3 V496.5 M479.4 473.4 V496.5 M484 471.3 V496.5 M488.8 477.8 V496.5 M493.7 471.3 V496.5 M498.3 471.3 V496.5 M517.2 471.3 V496.5 M522 471.3 V496.5 M526.9 471.3 V496.5 M531.5 482 V496.5 M545.5 471.3 V496.5 M550.4 471.3 V496.5 M555.2 471.3 V496.5 M559.8 471.5 V496.5 M564.5 471.3 V496.5 M578.7 477.5 V496.5 M583.4 470.5 V496.5 M592.8 477.5 V496.5 M597.6 474.3 V496.5 M611.7 475.9 V496.5 M616.5 471.3 V496.5 M626 477.5 V496.5 M630.8 470 V496.5 M644.9 478 V496.5 M649.7 471.3 V496.5 M749.2 471.3 V496.5 M754.1 471.3 V496.5 M758.7 471.3 V496.5 M313.5 471.9 V496.5 M319.1 423.5 V496.5 M323.9 471.9 V496.5 M328.4 471.9 V496.5 M347 471.9 V496.5 M351.8 471.9 V496.5 M356.7 471.9 V496.5 M361.5 471.9 V496.5 M366.4 471.9 V496.5 M385.1 469.5 V496.5 M389.6 469.5 V496.5 M394.5 469.5 V496.5 M399.3 469.5 V496.5 M413.4 471.2 V496.5 M418.2 469 V496.5 M749.2 471 V496.5 M754.1 471 V496.5 M758.7 471 V496.5" stroke="#ff7f0e" stroke-width="1.7" fill="none"/>
<path d="M119 496.6 H652" stroke="#ff7f0e" stroke-width="2.2"/>
<path d="M650 383 V496.5 M654.8 380 V496.5 M659.4 378.8 V496.5 M664 378.2 V496.5 M678.1 368.9 V496.5 M682.9 403.5 V496.5 M687.8 375.8 V496.5 M692.6 377 V496.5 M711.5 368.9 V496.5 M716.2 370.3 V496.5 M721 368.5 V496.5 M725.9 363.8 V496.5 M730.2 366.6 V496.5 M744.5 361.5 V496.5" stroke="#2ca02c" stroke-width="2" fill="none"/>
<path d="M650 496.8 H1073" stroke="#2ca02c" stroke-width="2.5"/>
<g fill="#1f77b4"><circle cx="777.7" cy="491.3" r="4"/><circle cx="782.5" cy="491.3" r="4"/><circle cx="787.2" cy="491.3" r="4"/><circle cx="792" cy="491.3" r="4"/><circle cx="796.7" cy="491.3" r="4"/><circle cx="810.9" cy="491.3" r="4"/><circle cx="815.6" cy="491.3" r="4"/><circle cx="820.4" cy="491.3" r="4"/><circle cx="825.1" cy="491.3" r="4"/><circle cx="829.9" cy="491.3" r="4"/><circle cx="844.1" cy="491.3" r="4"/><circle cx="848.8" cy="491.3" r="4"/><circle cx="853.6" cy="491.3" r="4"/><circle cx="858.3" cy="491.3" r="4"/><circle cx="863" cy="491.3" r="4"/><circle cx="877.2" cy="491.3" r="4"/><circle cx="882" cy="491.3" r="4"/><circle cx="886.7" cy="491.3" r="4"/><circle cx="891.5" cy="491.3" r="4"/><circle cx="896.2" cy="491.3" r="4"/><circle cx="910.4" cy="491.3" r="4"/><circle cx="915.2" cy="491.3" r="4"/><circle cx="919.9" cy="491.3" r="4"/><circle cx="924.6" cy="491.3" r="4"/><circle cx="929.4" cy="491.3" r="4"/><circle cx="943.6" cy="491.3" r="4"/><circle cx="948.3" cy="491.3" r="4"/><circle cx="953.1" cy="491.3" r="4"/><circle cx="957.8" cy="491.3" r="4"/><circle cx="962.5" cy="491.3" r="4"/><circle cx="976.8" cy="491.3" r="4"/><circle cx="981.5" cy="491.3" r="4"/><circle cx="986.2" cy="491.3" r="4"/><circle cx="991" cy="491.3" r="4"/><circle cx="995.7" cy="491.3" r="4"/><circle cx="1009.9" cy="491.3" r="4"/><circle cx="1014.7" cy="491.3" r="4"/><circle cx="1019.4" cy="491.3" r="4"/><circle cx="1024.1" cy="491.3" r="4"/><circle cx="1028.9" cy="491.3" r="4"/></g>
<path d="M777.7 493 V496 M782.5 493 V496 M787.2 493 V496 M792 493 V496 M796.7 493 V496 M810.9 493 V496 M815.6 493 V496 M820.4 493 V496 M825.1 493 V496 M829.9 493 V496 M844.1 493 V496 M848.8 493 V496 M853.6 493 V496 M858.3 493 V496 M863 493 V496 M877.2 493 V496 M882 493 V496 M886.7 493 V496 M891.5 493 V496 M896.2 493 V496 M910.4 493 V496 M915.2 493 V496 M919.9 493 V496 M924.6 493 V496 M929.4 493 V496 M943.6 493 V496 M948.3 493 V496 M953.1 493 V496 M957.8 493 V496 M962.5 493 V496 M976.8 493 V496 M981.5 493 V496 M986.2 493 V496 M991 493 V496 M995.7 493 V496 M1009.9 493 V496 M1014.7 493 V496 M1019.4 493 V496 M1024.1 493 V496 M1028.9 493 V496 M1043.1 493.5 V496 M1047.8 493.5 V496 M1052.6 493.5 V496 M1057.3 493.5 V496 M1062.1 493.5 V496" stroke="#ff7f0e" stroke-width="2"/>
<path d="M124.6 224 V521" stroke="#ff0000" stroke-width="2" stroke-dasharray="2 5"/>
<path d="M650.2 224 V521" stroke="#ff0000" stroke-width="2" stroke-dasharray="2 5"/>
<path d="M891.2 224 V521" stroke="#ff0000" stroke-width="2" stroke-dasharray="2 5"/>
<path d="M905.3 224 V521" stroke="#ff0000" stroke-width="2" stroke-dasharray="2 5"/>
<text x="50" y="501.5" text-anchor="end" font-size="14" fill="#333">0</text>
<path d="M54 496.5 H60" stroke="#333" stroke-width="1"/>
<text x="50" y="473.9" text-anchor="end" font-size="14" fill="#333">50 000</text>
<path d="M54 468.9 H60" stroke="#333" stroke-width="1"/>
<text x="50" y="446.4" text-anchor="end" font-size="14" fill="#333">100 000</text>
<path d="M54 441.4 H60" stroke="#333" stroke-width="1"/>
<text x="50" y="418.9" text-anchor="end" font-size="14" fill="#333">150 000</text>
<path d="M54 413.9 H60" stroke="#333" stroke-width="1"/>
<text x="50" y="391.3" text-anchor="end" font-size="14" fill="#333">200 000</text>
<path d="M54 386.3 H60" stroke="#333" stroke-width="1"/>
<text x="50" y="363.8" text-anchor="end" font-size="14" fill="#333">250 000</text>
<path d="M54 358.8 H60" stroke="#333" stroke-width="1"/>
<text x="50" y="336.2" text-anchor="end" font-size="14" fill="#333">300 000</text>
<path d="M54 331.2 H60" stroke="#333" stroke-width="1"/>
<text x="50" y="308.6" text-anchor="end" font-size="14" fill="#333">350 000</text>
<path d="M54 303.6 H60" stroke="#333" stroke-width="1"/>
<text x="50" y="281.1" text-anchor="end" font-size="14" fill="#333">400 000</text>
<path d="M54 276.1 H60" stroke="#333" stroke-width="1"/>
<text x="50" y="253.5" text-anchor="end" font-size="14" fill="#333">450 000</text>
<path d="M54 248.5 H60" stroke="#333" stroke-width="1"/>
<path d="M181.5 524 V530" stroke="#000" stroke-width="1"/>
<text x="181.3" y="543" text-anchor="middle" font-size="14" fill="#333">Octobre</text>
<path d="M328.5 524 V530" stroke="#000" stroke-width="1"/>
<text x="328" y="543" text-anchor="middle" font-size="14" fill="#333">Novembre</text>
<path d="M469.5 524 V530" stroke="#000" stroke-width="1"/>
<text x="469.3" y="543" text-anchor="middle" font-size="14" fill="#333">Decembre</text>
<path d="M616.5 524 V530" stroke="#000" stroke-width="1"/>
<text x="616.7" y="543" text-anchor="middle" font-size="14" fill="#333">2014</text>
<path d="M763.5 524 V530" stroke="#000" stroke-width="1"/>
<text x="763" y="543" text-anchor="middle" font-size="14" fill="#333">Février</text>
<path d="M895.5 524 V530" stroke="#000" stroke-width="1"/>
<text x="895.5" y="543" text-anchor="middle" font-size="14" fill="#333">Mars</text>
<rect x="216" y="550" width="618" height="79" fill="#dedede"/>
<path d="M140.5 631 V624.5 H1048.5 V631" stroke="#000" stroke-width="1" fill="none"/>
<path d="M163.5 624.5 V631" stroke="#000" stroke-width="1"/>
<text x="163.2" y="643" text-anchor="middle" font-size="14" fill="#333">Août</text>
<path d="M240.5 624.5 V631" stroke="#000" stroke-width="1"/>
<text x="240.6" y="643" text-anchor="middle" font-size="14" fill="#333">Septembre</text>
<path d="M315.5 624.5 V631" stroke="#000" stroke-width="1"/>
<text x="315.5" y="643" text-anchor="middle" font-size="14" fill="#333">Octobre</text>
<path d="M392.5 624.5 V631" stroke="#000" stroke-width="1"/>
<text x="392.2" y="643" text-anchor="middle" font-size="14" fill="#333">Novembre</text>
<path d="M466.5 624.5 V631" stroke="#000" stroke-width="1"/>
<text x="466.3" y="643" text-anchor="middle" font-size="14" fill="#333">Decembre</text>
<path d="M544.5 624.5 V631" stroke="#000" stroke-width="1"/>
<text x="544" y="643" text-anchor="middle" font-size="14" fill="#333">2014</text>
<path d="M621.5 624.5 V631" stroke="#000" stroke-width="1"/>
<text x="621.2" y="643" text-anchor="middle" font-size="14" fill="#333">Février</text>
<path d="M690.5 624.5 V631" stroke="#000" stroke-width="1"/>
<text x="690.2" y="643" text-anchor="middle" font-size="14" fill="#333">Mars</text>
<path d="M768.5 624.5 V631" stroke="#000" stroke-width="1"/>
<text x="768.3" y="643" text-anchor="middle" font-size="14" fill="#333">Avril</text>
<path d="M842.5 624.5 V631" stroke="#000" stroke-width="1"/>
<text x="842.6" y="643" text-anchor="middle" font-size="14" fill="#333">Mai</text>
<path d="M918.5 624.5 V631" stroke="#000" stroke-width="1"/>
<text x="918.8" y="643" text-anchor="middle" font-size="14" fill="#333">Juin</text>
<path d="M994.5 624.5 V631" stroke="#000" stroke-width="1"/>
<text x="994.6" y="643" text-anchor="middle" font-size="14" fill="#333">Juillet</text>
<path d="M282.9 579.9 V624.5 M285.4 579 V624.5 M288 581.9 V624.5 M297.9 583.6 V624.5 M300.4 585.9 V624.5 M305.3 584.8 V624.5 M307.9 583.6 V624.5 M315.3 606.3 V624.5 M317.8 606.3 V624.5 M320.3 609.8 V624.5 M322.8 606.3 V624.5 M325.3 603.7 V624.5 M332.7 604 V624.5 M335.2 604.3 V624.5 M337.6 595.2 V624.5 M340.2 594.9 V624.5 M342.7 590.6 V624.5 M350.1 594.5 V624.5 M352.6 598.5 V624.5 M355.1 594.7 V624.5 M357.6 596.6 V624.5 M360.2 596.8 V624.5 M367.6 595.5 V624.5 M370 592.5 V624.5 M372.5 598.3 V624.5 M375.1 591.5 V624.5 M385.1 594.8 V624.5 M387.6 591.5 V624.5 M390.1 591 V624.5 M392.5 592.1 V624.5 M402.5 592.5 V624.5 M405 592.2 V624.5 M407.5 591.7 V624.5 M410 588.6 V624.5 M412.6 592.1 V624.5 M422.4 588.9 V624.5 M425 586.6 V624.5 M427.5 589.6 V624.5 M430.1 590.1 V624.5 M437.5 587.1 V624.5 M439.9 589.3 V624.5 M442.3 587.1 V624.5 M444.7 589.3 V624.5 M447.2 582.4 V624.5 M454.7 588.9 V624.5 M457.2 586.1 V624.5 M459.8 588.2 V624.5 M462.3 588.1 V624.5 M464.8 587.9 V624.5 M472.1 586.9 V624.5 M474.6 584.9 V624.5 M477.1 582.2 V624.5 M479.7 592.3 V624.5 M482.1 588.1 V624.5 M492.1 584.7 V624.5 M494.6 587.6 V624.5 M497.2 586.8 V624.5 M499.6 583.8 V624.5 M507 591.2 V624.5 M509.5 588.1 V624.5 M512.1 587.1 V624.5 M514.5 587.7 V624.5 M517 586.6 V624.5 M524.4 584.9 V624.5 M526.9 586.3 V624.5 M531.9 584 V624.5 M534.4 584.1 V624.5 M541.8 588.8 V624.5 M544.3 582.4 V624.5 M549.3 585.3 V624.5 M551.9 585.3 V624.5 M559.3 586 V624.5 M561.8 588.5 V624.5 M564.4 587.5 V624.5 M566.8 587.8 V624.5 M569.2 588 V624.5 M576.8 586.4 V624.5 M579.3 595 V624.5 M581.8 588.1 V624.5 M584.3 589 V624.5 M594.3 586.2 V624.5 M596.7 586.7 V624.5 M599.3 586.9 V624.5 M601.7 585 V624.5 M604.2 586.7 V624.5 M611.7 584.1 V624.5 M614.2 586 V624.5 M616.8 585.8 V624.5 M619.2 586.4 V624.5" stroke="#1f77b4" stroke-width="1.5"/>
<path d="M282.9 619.5 V624.5 M285.4 619.5 V624.5 M288 619.5 V624.5 M297.9 619.5 V624.5 M300.4 619.5 V624.5 M305.3 619.5 V624.5 M307.9 619.5 V624.5 M315.3 619.5 V624.5 M317.8 619.5 V624.5 M320.3 619.5 V624.5 M322.8 619.5 V624.5 M325.3 619.5 V624.5 M332.7 619.5 V624.5 M335.2 619.5 V624.5 M337.6 619.5 V624.5 M340.2 619.5 V624.5 M342.7 619.5 V624.5 M350.1 619.5 V624.5 M352.6 619.5 V624.5 M355.1 619.5 V624.5 M357.6 619.5 V624.5 M360.2 619.5 V624.5 M367.6 619.5 V624.5 M370 619.5 V624.5 M372.5 619.5 V624.5 M375.1 619.5 V624.5 M385.1 619.5 V624.5 M387.6 619.5 V624.5 M390.1 619.5 V624.5 M392.5 619.5 V624.5 M402.5 619.5 V624.5 M405 619.5 V624.5 M407.5 619.5 V624.5 M410 619.5 V624.5 M412.6 619.5 V624.5 M422.4 619.5 V624.5 M425 619.5 V624.5 M427.5 619.5 V624.5 M430.1 619.5 V624.5 M437.5 619.5 V624.5 M439.9 619.5 V624.5 M442.3 619.5 V624.5 M444.7 619.5 V624.5 M447.2 619.5 V624.5 M454.7 619.5 V624.5 M457.2 619.5 V624.5 M459.8 619.5 V624.5 M462.3 619.5 V624.5 M464.8 619.5 V624.5 M472.1 619.5 V624.5 M474.6 619.5 V624.5 M477.1 619.5 V624.5 M479.7 619.5 V624.5 M482.1 619.5 V624.5 M492.1 619.5 V624.5 M494.6 619.5 V624.5 M497.2 619.5 V624.5 M499.6 619.5 V624.5 M507 619.5 V624.5 M509.5 619.5 V624.5 M512.1 619.5 V624.5 M514.5 619.5 V624.5 M517 619.5 V624.5 M524.4 619.5 V624.5 M526.9 619.5 V624.5 M531.9 619.5 V624.5 M534.4 619.5 V624.5 M541.8 619.5 V624.5 M544.3 619.5 V624.5 M549.3 619.5 V624.5 M551.9 619.5 V624.5 M559.3 619.5 V624.5 M561.8 619.5 V624.5 M564.4 619.5 V624.5 M566.8 619.5 V624.5 M569.2 619.5 V624.5 M576.8 619.5 V624.5 M579.3 619.5 V624.5 M581.8 619.5 V624.5 M584.3 619.5 V624.5 M594.3 619.5 V624.5 M596.7 619.5 V624.5 M599.3 619.5 V624.5 M601.7 619.5 V624.5 M604.2 619.5 V624.5 M611.7 619.5 V624.5 M614.2 619.5 V624.5 M616.8 619.5 V624.5 M619.2 619.5 V624.5" stroke="#ff7f0e" stroke-width="1.5"/>
<path d="M562 605.5 V624.5 M564.5 605 V624.5 M566.9 604.8 V624.5 M569.3 604.7 V624.5 M576.8 603.2 V624.5 M579.3 609 V624.5 M581.9 604.3 V624.5 M584.4 604.5 V624.5 M594.4 603.2 V624.5 M596.8 603.4 V624.5 M599.4 603.1 V624.5 M601.9 602.3 V624.5 M604.2 602.8 V624.5 M611.7 602 V624.5" stroke="#2ca02c" stroke-width="1.5"/>
<path d="M387.8 612.5 V624.5" stroke="#ff7f0e" stroke-width="1.5"/>
<path d="M282 624.3 H562" stroke="#ff7f0e" stroke-width="1.8"/>
<path d="M562 624.3 H784" stroke="#2ca02c" stroke-width="1.6"/>
<path d="M285.8 550 V629" stroke="#ff3b3b" stroke-width="1.8"/>
<path d="M562.2 550 V629" stroke="#ff3b3b" stroke-width="1.8"/>
<path d="M689 550 V629" stroke="#ff3b3b" stroke-width="1.8"/>
<path d="M696.7 550 V629" stroke="#ff3b3b" stroke-width="1.8"/>
<rect x="60" y="649" width="20" height="20" fill="#1f77b4"/>
<rect x="260" y="649" width="20" height="20" fill="#ff7f0e"/>
<rect x="460" y="649" width="20" height="20" fill="#2ca02c"/>
<text x="89.5" y="659" font-size="14" fill="#333" textLength="126.5" lengthAdjust="spacing">nb_transaction_http</text>
<text x="310.3" y="659" font-size="14" fill="#333" textLength="132.5" lengthAdjust="spacing">nb_erreur_afj_metier</text>
<text x="530.3" y="659" font-size="14" fill="#333" textLength="118.8" lengthAdjust="spacing">nb_erreur_afj_web</text>
<text x="443" y="689.5" font-size="14" fill="#333" textLength="463.5" lengthAdjust="spacing">13286 valeurs dont 12813 trop faibles pour être affichées(&lt;1% soit 4968)</text>
<path d="M1221 150.5 A138 138 0 1 1 1083.2 280.3 L1175.1 285.8 A46 46 0 1 0 1221 242.5 Z" fill="#1f77b4"/>
<path d="M1083.2 280.3 A138 138 0 0 1 1159.4 165 L1200.5 247.3 A46 46 0 0 0 1175.1 285.8 Z" fill="#ff7f0e"/>
<path d="M1159.4 165 A138 138 0 0 1 1221 150.5 L1221 242.5 A46 46 0 0 0 1200.5 247.3 Z" fill="#2ca02c"/>
<text x="1199.6" y="204" text-anchor="middle" font-size="14" fill="#000">afj web</text>
<text x="1144" y="243" text-anchor="middle" font-size="14" fill="#000">afj metier</text>
<text x="1283" y="360.5" text-anchor="middle" font-size="14" fill="#000" textLength="78.5" lengthAdjust="spacing">transac. http</text>
<text x="1221" y="299.6" text-anchor="middle" font-size="32.3" font-weight="bold" fill="#000">75</text>
</svg>
<div id="sb"></div>
<div id="thumb"></div>
<svg width="1365" height="737" style="z-index:8;pointer-events:none">
<path d="M1353 11.5 L1357 6.5 L1361 11.5Z" fill="#a3a3a3"/>
</svg>
</body></html>
